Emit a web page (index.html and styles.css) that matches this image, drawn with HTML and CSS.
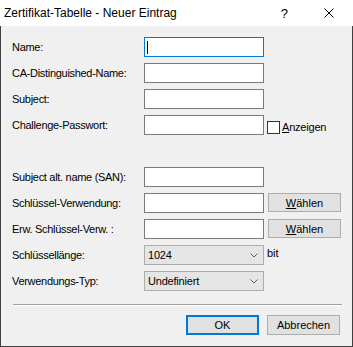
FILE: index.html
```html
<!DOCTYPE html>
<html>
<head>
<meta charset="utf-8">
<link rel="stylesheet" href="styles.css">
</head>
<body>
<div class="window">
  <div class="titlebar">
    <span class="title">Zertifikat-Tabelle - Neuer Eintrag</span>
    <span class="help">?</span>
    <svg class="close" width="10" height="10" viewBox="0 0 10 10"><path d="M0.5 0.5L9.5 9.5M9.5 0.5L0.5 9.5" stroke="#000" stroke-width="1" fill="none"/></svg>
  </div>
  <div class="client">
    <div class="form">
      <label class="lbl">Name:</label>
      <div class="input focused"><span class="caret"></span></div>
      <div></div>

      <label class="lbl">CA-Distinguished-Name:</label>
      <div class="input"></div>
      <div></div>

      <label class="lbl">Subject:</label>
      <div class="input"></div>
      <div></div>

      <label class="lbl">Challenge-Passwort:</label>
      <div class="input"></div>
      <div class="check"><span class="box"></span><span><u>A</u>nzeigen</span></div>

      <div class="spacer"></div>

      <label class="lbl">Subject alt. name (SAN):</label>
      <div class="input"></div>
      <div></div>

      <label class="lbl">Schlüssel-Verwendung:</label>
      <div class="input"></div>
      <div class="btn small"><u>W</u>ählen</div>

      <label class="lbl">Erw. Schlüssel-Verw. :</label>
      <div class="input"></div>
      <div class="btn small"><u>W</u>ählen</div>

      <label class="lbl">Schlüssellänge:</label>
      <div class="select"><span>1024</span><svg class="chev" width="8" height="5" viewBox="0 0 8 5"><path d="M0.5 0.5L4 4L7.5 0.5" stroke="#606060" stroke-width="1" fill="none"/></svg></div>
      <div class="unit">bit</div>

      <label class="lbl">Verwendungs-Typ:</label>
      <div class="select"><span>Undefiniert</span><svg class="chev" width="8" height="5" viewBox="0 0 8 5"><path d="M0.5 0.5L4 4L7.5 0.5" stroke="#606060" stroke-width="1" fill="none"/></svg></div>
      <div></div>
    </div>
    <div class="separator"></div>
    <div class="actions">
      <div class="btn default">OK</div>
      <div class="btn">Abbrechen</div>
    </div>
  </div>
</div>
</body>
</html>
```

FILE: styles.css
```css
html, body {
  margin: 0;
  padding: 0;
  background: #f0f0f0;
}
.window {
  width: 353px;
  height: 347px;
  display: flex;
  flex-direction: column;
  font-family: "Liberation Sans", Arial, sans-serif;
  font-size: 11px;
  color: #000;
}
.titlebar {
  height: 26px;
  background: #fff;
  display: flex;
  align-items: center;
}
.title {
  font-size: 12px;
  margin-left: 4px;
  flex: 1;
}
.help {
  font-size: 13px;
  margin-right: 36px;
}
.close {
  margin-right: 19px;
}
.client {
  flex: 1;
  background: #f0f0f0;
  border: 1px solid #404040;
  border-top: none;
  padding: 11px 11px 0 11px;
}
.form {
  display: grid;
  grid-template-columns: 132px 120px auto;
  grid-auto-rows: 20px;
  row-gap: 6px;
}
.lbl {
  display: flex;
  align-items: center;
  white-space: nowrap;
  letter-spacing: -0.3px;
}
.spacer {
  grid-column: 1 / 4;
}
.input {
  box-sizing: border-box;
  background: #fff;
  border: 1px solid #7a7a7a;
  height: 20px;
  position: relative;
}
.input.focused {
  border-color: #0078d7;
}
.caret {
  position: absolute;
  left: 2px;
  top: 3px;
  width: 1px;
  height: 13px;
  background: #000;
}
.check {
  display: flex;
  align-items: center;
  margin-left: 3px;
  gap: 2px;
}
.box {
  box-sizing: border-box;
  width: 13px;
  height: 13px;
  border: 1px solid #333;
  background: #fff;
  margin-top: 4px;
}
.check span:last-child {
  margin-top: 4px;
  letter-spacing: -0.2px;
}
.btn {
  box-sizing: border-box;
  background: #e1e1e1;
  border: 1px solid #adadad;
  display: flex;
  align-items: center;
  justify-content: center;
  width: 73px;
  height: 20px;
}
.btn.small {
  margin-left: 4px;
  height: 19px;
}
.select {
  box-sizing: border-box;
  background: #e5e5e5;
  border: 1px solid #acacac;
  display: flex;
  align-items: center;
  justify-content: space-between;
  padding: 0 5px 0 3px;
  letter-spacing: -0.2px;
}
.unit {
  display: flex;
  align-items: center;
  margin-left: 3px;
  margin-top: -4px;
}
.separator {
  margin: 13px -1px 0 1px;
  height: 1px;
  background: #a0a0a0;
  border-bottom: 1px solid #fff;
}
.actions {
  display: flex;
  justify-content: flex-end;
  gap: 8px;
  margin-top: 9px;
  padding-right: 1px;
}
.btn.default {
  border-color: #0078d7;
  box-shadow: inset 0 0 0 1px #0078d7;
}
```
